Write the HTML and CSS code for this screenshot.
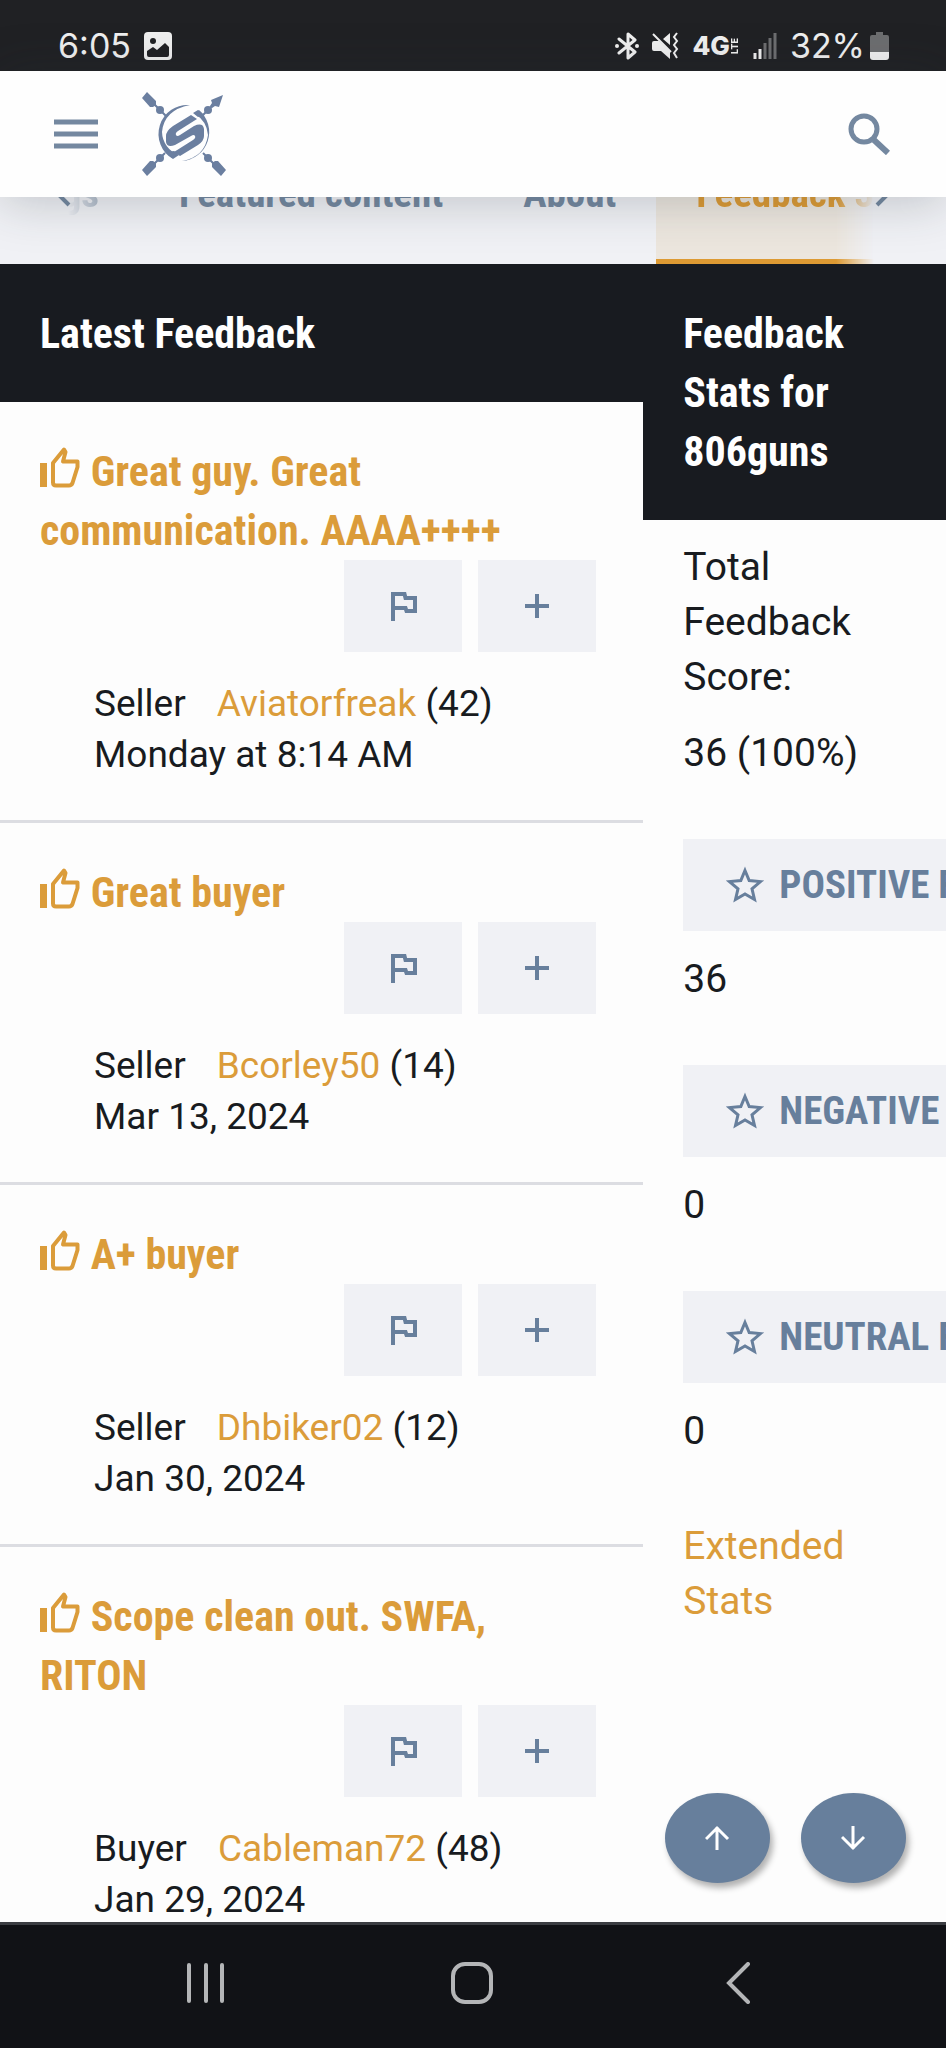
FILE: index.html
```
<!DOCTYPE html>
<html lang="en">
<head>
    <meta charset="UTF-8">
    <meta name="viewport" content="width=device-width, initial-scale=1.0">
    <title>806guns - Feedback</title>
    <link rel="stylesheet" href="styles.css">
</head>
<body>
    <!-- shared icons -->
    <svg class="sprite" aria-hidden="true">
        <symbol id="thumb" viewBox="0 0 40 42">
            <path fill="currentColor" d="M0 17h7v24H0z"/>
            <path fill="none" stroke="currentColor" stroke-width="4" stroke-linejoin="round" d="M13 17 L24 3.5 L25.500 6 L23 15.500 H37.500 V21 L32.500 37 Q31.500 39.500 29 39.500 H16 Q13 39.500 13 36.500 Z"/>
        </symbol>
        <symbol id="flag" viewBox="0 0 28 32">
            <path fill="none" stroke="currentColor" stroke-width="4" d="M4 31V4H15.500L16.500 8H26V21H17.500L16.500 18H4"/>
        </symbol>
        <symbol id="plus" viewBox="0 0 28 28">
            <path fill="none" stroke="currentColor" stroke-width="4" d="M14 2v24M2 14h24"/>
        </symbol>
        <symbol id="star" viewBox="0 0 40 38">
            <path fill="none" stroke="currentColor" stroke-width="3" d="M20 4.500 L24.200 14.600 L35.500 15.600 L27 22.800 L29.500 33.500 L20 28 L10.500 33.500 L13 22.800 L4.500 15.600 L15.800 14.600 Z"/>
        </symbol>
    </svg>

    <div class="status-bar">
        <div class="status-left">
            <span>6:05</span>
            <svg width="28" height="28" viewBox="0 0 28 28">
                <rect width="28" height="28" rx="4" fill="#f0f0f0"/>
                <circle cx="9" cy="9" r="3" fill="#202124"/>
                <path fill="#202124" d="M3 19l6-4 4 3 8-7 4 4v8q0 2-2 2H5q-2 0-2-2z"/>
            </svg>
        </div>
        <div class="status-right">
            <svg width="24" height="28" viewBox="0 0 24 28">
                <path fill="none" stroke="#f0f0f0" stroke-width="3" stroke-linejoin="round" stroke-linecap="round" d="M4 7l16 13-7 6V2l7 6L4 21"/>
                <circle cx="2" cy="14" r="2" fill="#f0f0f0"/>
                <circle cx="22" cy="14" r="2" fill="#f0f0f0"/>
            </svg>
            <svg width="27" height="28" viewBox="0 0 27 28">
                <path fill="#f0f0f0" d="M0 11q0-2 2-2h5l11 10v8l-9-8H2q-2 0-2-2zM11 7l7-6v12z"/>
                <path fill="none" stroke="#f0f0f0" stroke-width="2" d="M1 2l18 18M25 1l-3 4 3 4-3 4 3 4-3 4 3 5"/>
            </svg>
            <span class="network">4G<span class="lte">LTE</span></span>
            <svg width="24" height="26" viewBox="0 0 24 26">
                <path stroke="#f0f0f0" stroke-width="3" d="M2 20v6M7 16v10"/>
                <path stroke="#6d6e70" stroke-width="3" d="M12 10v16M17 5v21M22 0v26"/>
            </svg>
            <span class="percent">32%</span>
            <svg width="19" height="28" viewBox="0 0 19 28">
                <path fill="#6d6e70" d="M6 0h7v3h4q2 0 2 2v16H0V5q0-2 2-2h4z"/>
                <path fill="#f0f0f0" d="M0 20h19v5q0 3-3 3H3q-3 0-3-3z"/>
            </svg>
        </div>
    </div>

    <header class="site-header">
        <button class="icon-button" type="button" aria-label="Menu">
            <svg width="44" height="30" viewBox="0 0 44 30">
                <path stroke="#7488a0" stroke-width="5" d="M0 3h44M0 15h44M0 27h44"/>
            </svg>
        </button>
        <a class="logo" href="#" aria-label="Home">
            <svg width="84" height="84" viewBox="0 0 84 84">
                <g fill="#6b7fa0">
                    <path stroke="#6b7fa0" stroke-width="2" d="M10 10l14 14M10 74l13-13M74 74L61 61M72 12L60 24"/>
                    <circle cx="18" cy="18" r="4"/>
                    <circle cx="18" cy="66" r="4"/>
                    <circle cx="66" cy="66" r="4"/>
                    <circle cx="66" cy="18" r="4"/>
                    <path d="M0 6l5-6 9 9v4l-3 2h-3zM0 78l5 6 9-9v-4l-3-2h-3zM84 78l-5 6-9-9v-4l3-2h3zM81 3l-4 12-4-1-3 2-2-2 2-3-1-3z"/>
                    <!-- ring -->
                    <path d="M48 13A29 29 0 0 0 31 67L37 63A25 25 0 0 1 20 40Q22 18 48 13zM40 69A29 29 0 0 0 57 18L53 22A27 27 0 0 1 66 43Q63 65 40 69z"/>
                    <!-- central mark -->
                    <path d="M49 23l6 4-19 12q-3 2-2 4t4 0l14-9q9-4 10 3v7q0 5-6 9L38 64l-6-4 19-12q3-2 2-4t-4 0L33 53q-8 3-9-3v-6q0-5 7-10z"/>
                    <path d="M51 21l5-3 5 4-5 3zM24 60l6 6 7-4-5-3z"/>
                </g>
            </svg>
        </a>
        <button class="icon-button search" type="button" aria-label="Search">
            <svg width="42" height="42" viewBox="0 0 42 42">
                <circle cx="16" cy="16" r="13" fill="none" stroke="#7488a0" stroke-width="5"/>
                <path stroke="#7488a0" stroke-width="6" d="M26 27l14 13"/>
            </svg>
        </button>
    </header>

    <nav class="tabs">
        <a class="tab tab-first" href="#">Postings</a>
        <a class="tab" href="#">Featured content</a>
        <a class="tab" href="#">About</a>
        <a class="tab active" href="#">Feedback 3</a>
        <svg class="tab-arrow prev" width="16" height="24" viewBox="0 0 16 24"><path fill="none" stroke="#7488a0" stroke-width="4" d="M13 2L3 12l10 10"/></svg>
        <svg class="tab-arrow next" width="16" height="24" viewBox="0 0 16 24"><path fill="none" stroke="#7488a0" stroke-width="4" d="M3 2l10 10L3 22"/></svg>
    </nav>

    <main class="columns">
        <section class="feedback">
            <h2 class="block-header">Latest Feedback</h2>

            <article class="entry">
                <h3><a href="#"><svg class="thumb"><use href="#thumb"/></svg> Great guy. Great communication. AAAA++++</a></h3>
                <div class="actions">
                    <button type="button" aria-label="Report"><svg width="28" height="32"><use href="#flag"/></svg></button>
                    <button type="button" aria-label="Expand"><svg width="28" height="28"><use href="#plus"/></svg></button>
                </div>
                <div class="meta">
                    <div><span class="role">Seller</span><a href="#">Aviatorfreak</a> (42)</div>
                    <time>Monday at 8:14 AM</time>
                </div>
            </article>

            <article class="entry">
                <h3><a href="#"><svg class="thumb"><use href="#thumb"/></svg> Great buyer</a></h3>
                <div class="actions">
                    <button type="button" aria-label="Report"><svg width="28" height="32"><use href="#flag"/></svg></button>
                    <button type="button" aria-label="Expand"><svg width="28" height="28"><use href="#plus"/></svg></button>
                </div>
                <div class="meta">
                    <div><span class="role">Seller</span><a href="#">Bcorley50</a> (14)</div>
                    <time>Mar 13, 2024</time>
                </div>
            </article>

            <article class="entry">
                <h3><a href="#"><svg class="thumb"><use href="#thumb"/></svg> A+ buyer</a></h3>
                <div class="actions">
                    <button type="button" aria-label="Report"><svg width="28" height="32"><use href="#flag"/></svg></button>
                    <button type="button" aria-label="Expand"><svg width="28" height="28"><use href="#plus"/></svg></button>
                </div>
                <div class="meta">
                    <div><span class="role">Seller</span><a href="#">Dhbiker02</a> (12)</div>
                    <time>Jan 30, 2024</time>
                </div>
            </article>

            <article class="entry">
                <h3><a href="#"><svg class="thumb"><use href="#thumb"/></svg> Scope clean out. SWFA, RITON</a></h3>
                <div class="actions">
                    <button type="button" aria-label="Report"><svg width="28" height="32"><use href="#flag"/></svg></button>
                    <button type="button" aria-label="Expand"><svg width="28" height="28"><use href="#plus"/></svg></button>
                </div>
                <div class="meta">
                    <div><span class="role">Buyer</span><a href="#">Cableman72</a> (48)</div>
                    <time>Jan 29, 2024</time>
                </div>
            </article>
        </section>

        <aside class="stats">
            <h2 class="block-header">Feedback Stats for 806guns</h2>
            <div class="stats-body">
                <p>Total Feedback Score:</p>
                <p>36 (100%)</p>
                <div class="stat">
                    <button type="button"><svg width="40" height="38"><use href="#star"/></svg>POSITIVE FEEDBACK</button>
                    <p>36</p>
                </div>
                <div class="stat">
                    <button type="button"><svg width="40" height="38"><use href="#star"/></svg>NEGATIVE FEEDBACK</button>
                    <p>0</p>
                </div>
                <div class="stat">
                    <button type="button"><svg width="40" height="38"><use href="#star"/></svg>NEUTRAL FEEDBACK</button>
                    <p>0</p>
                </div>
                <a class="extended" href="#">Extended Stats</a>
            </div>
        </aside>

        <div class="scroll-buttons">
            <button type="button" aria-label="Scroll to top"><svg width="26" height="26" viewBox="0 0 26 26"><path fill="none" stroke="#fff" stroke-width="3" d="M12 25V2M1 14L12 3l11 11"/></svg></button>
            <button type="button" aria-label="Scroll to bottom"><svg width="26" height="26" viewBox="0 0 26 26"><path fill="none" stroke="#fff" stroke-width="3" d="M12 1v23M1 12l11 11 11-11"/></svg></button>
        </div>
    </main>

    <nav class="phone-nav">
        <button type="button" aria-label="Recent apps"><svg width="38" height="42" viewBox="0 0 38 42"><path stroke="#b4b5b7" stroke-width="4" stroke-linecap="round" d="M2 3v36M19 3v36M35 3v36"/></svg></button>
        <button type="button" aria-label="Home"><svg width="42" height="42" viewBox="0 0 42 42"><rect x="2" y="2" width="38" height="38" rx="12" fill="none" stroke="#b4b5b7" stroke-width="4"/></svg></button>
        <button type="button" aria-label="Back"><svg width="24" height="42" viewBox="0 0 24 42"><path fill="none" stroke="#b4b5b7" stroke-width="4" stroke-linecap="round" d="M22 2L3 21l19 19"/></svg></button>
    </nav>
</body>
</html>
```
FILE: styles.css
```
* {
    box-sizing: border-box;
}

body {
    margin: 0;
    height: 100vh;
    display: flex;
    flex-direction: column;
    overflow: hidden;
    background: #fdfdfd;
    color: #181b20;
    font-family: Roboto, sans-serif;
    font-size: 39px;
    line-height: 55px;
}

h2, h3, p {
    margin: 0;
}

a {
    color: #db9c3a;
    text-decoration: none;
}

button {
    border: 0;
    padding: 0;
    background: none;
    color: #677f9c;
    font: inherit;
}

svg {
    display: block;
    flex-shrink: 0;
}

.sprite {
    position: absolute;
    width: 0;
    height: 0;
}

/* phone status bar */
.status-bar {
    flex-shrink: 0;
    display: flex;
    justify-content: space-between;
    padding: 20px 57px 0 58px;
    height: 71px;
    background: #202124;
    color: #f0f0f0;
    font-family: Inter, sans-serif;
    font-size: 34px;
    line-height: 51px;
}

.status-left, .status-right {
    display: flex;
    align-items: center;
    gap: 13px;
}

.status-right .percent {
    margin-right: -8px;
}

.network {
    display: flex;
    align-items: center;
    font-size: 26px;
    font-weight: 800;
}

.lte {
    writing-mode: vertical-rl;
    transform: rotate(180deg);
    font-size: 9px;
    line-height: 10px;
}

/* site header */
.site-header {
    position: relative;
    z-index: 2;
    flex-shrink: 0;
    display: flex;
    align-items: center;
    gap: 44px;
    height: 126px;
    padding: 0 56px 0 54px;
    background: #fefefe;
    box-shadow: 0 4px 50px rgba(40, 50, 60, 0.25);
}

.icon-button.search {
    margin-left: auto;
}

.tabs {
    position: relative;
    flex-shrink: 0;
    display: flex;
    margin-top: -60px;
    height: 127px;
    overflow: hidden;
    background: #f0f1f5;
}

.tab {
    padding: 30px 40px 0;
    color: #7488a0;
    font-family: "Roboto Condensed", "Liberation Sans Narrow", Roboto, sans-serif;
    font-size: 39px;
    font-weight: bold;
    line-height: 55px;
    white-space: nowrap;
}

.tab-first {
    width: 139px;
    direction: rtl;
    -webkit-mask-image: linear-gradient(to right, transparent 68px, #000 128px);
    mask-image: linear-gradient(to right, transparent 68px, #000 128px);
}

.tab.active {
    border-bottom: 5px solid #dd9a33;
    background: #ece6de;
    color: #dd9a33;
    -webkit-mask-image: linear-gradient(to right, #000 180px, transparent 218px);
    mask-image: linear-gradient(to right, #000 180px, transparent 218px);
}

.tab-arrow {
    position: absolute;
    top: 46px;
}

.tab-arrow.prev {
    left: 56px;
}

.tab-arrow.next {
    right: 56px;
}

/* page */
.columns {
    position: relative;
    flex: 1;
    min-height: 0;
    display: flex;
    overflow: hidden;
}

.feedback {
    width: 68%;
    flex-shrink: 0;
}

.stats {
    flex: 1;
    min-width: 0;
}

.block-header {
    padding: 40px 40px 39px;
    background: #181b20;
    color: #fff;
}

.block-header, .entry h3 {
    font-family: "Roboto Condensed", "Liberation Sans Narrow", Roboto, sans-serif;
    font-size: 42px;
    font-weight: bold;
    line-height: 59px;
}

.entry {
    padding: 40px 47px 40px 40px;
    border-bottom: 3px solid #dcdde2;
}

.thumb {
    display: inline-block;
    margin-right: 1px;
    width: 40px;
    height: 42px;
    vertical-align: -2px;
}

.actions {
    display: flex;
    justify-content: flex-end;
    gap: 16px;
}

.actions button {
    display: flex;
    align-items: center;
    justify-content: center;
    width: 118px;
    height: 92px;
    background: #f0f1f5;
}

.meta {
    margin-top: 26px;
    padding-left: 54px;
    font-size: 37px;
    line-height: 51px;
}

.role {
    margin-right: 31px;
}

.stats-body {
    padding: 20px 40px;
}

.stats-body p + p {
    margin-top: 21px;
}

.stat {
    margin-top: 58px;
}

.stat button {
    display: flex;
    align-items: center;
    gap: 14px;
    height: 92px;
    padding: 0 42px;
    background: #f0f1f5;
    font-family: "Roboto Condensed", "Liberation Sans Narrow", Roboto, sans-serif;
    font-size: 39px;
    font-weight: bold;
    white-space: nowrap;
}

.stat p {
    margin-top: 21px;
}

.extended {
    display: block;
    margin-top: 60px;
}

.scroll-buttons {
    position: absolute;
    right: 40px;
    bottom: 39px;
    display: flex;
    gap: 31px;
}

.scroll-buttons button {
    display: flex;
    align-items: center;
    justify-content: center;
    width: 105px;
    height: 90px;
    border-radius: 50%;
    background: #677f9c;
    box-shadow: 3px 5px 6px rgba(0, 0, 0, 0.3);
}

/* phone navigation */
.phone-nav {
    flex-shrink: 0;
    display: flex;
    justify-content: space-between;
    align-items: center;
    height: 126px;
    padding: 0 176px 8px 174px;
    border-top: 3px solid #3b3d42;
    background: #111216;
}

.phone-nav button {
    display: flex;
    justify-content: center;
    width: 64px;
}
```
